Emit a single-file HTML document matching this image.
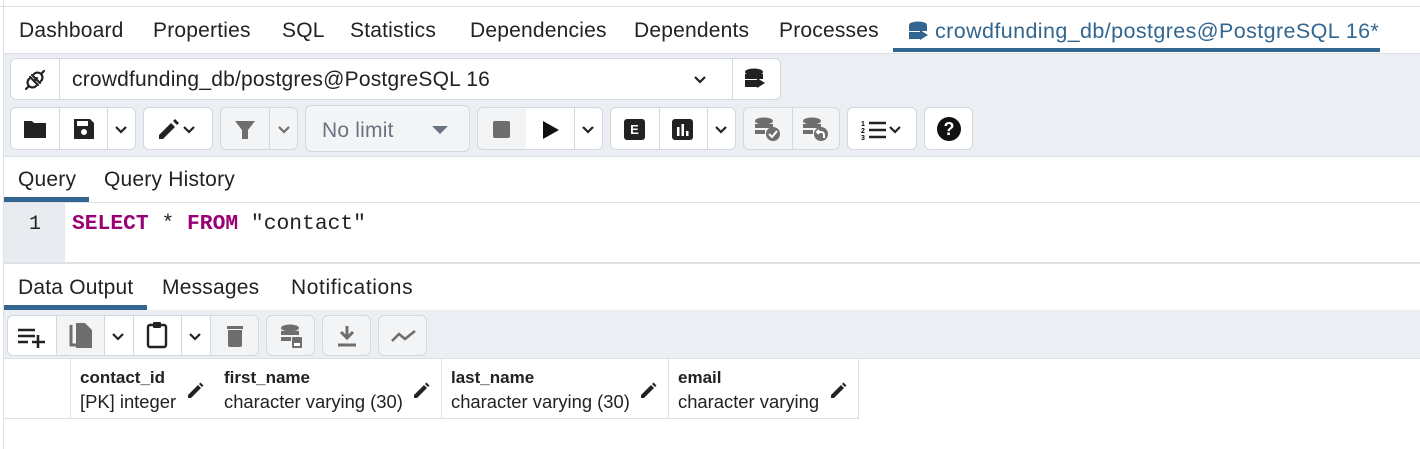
<!DOCTYPE html>
<html><head><meta charset="utf-8"><style>
*{box-sizing:border-box;margin:0;padding:0}
body{width:1420px;height:449px;position:relative;background:#fff;font-family:"Liberation Sans",sans-serif;color:#222;overflow:hidden}
.a{position:absolute}
.t{position:absolute;font-size:21px;letter-spacing:0.2px;color:#222;white-space:nowrap}
.grp{position:absolute;border:1px solid #d3d7de;border-radius:6px;background:#fff;overflow:hidden}
.dis{background:#f3f4f6}
.div{position:absolute;top:0;bottom:0;width:1px;background:#d3d7de}
.ic{position:absolute}
svg{display:block}
</style></head><body>
<div class="a" style="left:3px;top:0;width:1px;height:449px;background:#dde1e6"></div>
<div class="a" style="left:0;top:6px;width:1420px;height:1px;background:#dde1e6"></div>
<div class="t" style="left:19px;top:19px">Dashboard</div>
<div class="t" style="left:153px;top:19px">Properties</div>
<div class="t" style="left:282px;top:19px">SQL</div>
<div class="t" style="left:350px;top:19px">Statistics</div>
<div class="t" style="left:470px;top:19px">Dependencies</div>
<div class="t" style="left:634px;top:19px">Dependents</div>
<div class="t" style="left:779px;top:19px">Processes</div>
<svg class="a" style="left:908px;top:21px" width="22" height="20" viewBox="0 0 22 20"><ellipse cx="10" cy="4" rx="9" ry="3.5" fill="#326690"/><rect x="1" y="5" width="18" height="5" fill="#326690"/><rect x="1" y="11" width="12" height="7" fill="#326690"/><path d="M12 9 L20 14 L12 19Z" fill="#326690"/></svg>
<div class="t" style="left:935px;top:19px;color:#326690;font-size:21.5px;letter-spacing:0.4px">crowdfunding_db/postgres@PostgreSQL 16*</div>
<div class="a" style="left:893px;top:48px;width:487px;height:4px;background:#326690"></div>
<div class="a" style="left:4px;top:53px;width:1416px;height:103px;background:#ebeef2;border-top:1px solid #dde1e6"></div>
<div class="grp" style="left:10px;top:58px;width:771px;height:42px">
<div class="div" style="left:48px"></div><div class="div" style="left:721px"></div>
<svg class="ic" style="left:12px;top:9px" width="24" height="24" viewBox="0 0 24 24" fill="none" stroke="#222" stroke-width="2.2" stroke-linecap="round"><path d="M9 7 L17 15 M7 9 L15 17 M6 11 a4 4 0 0 0 7 7 M11 6 a4 4 0 0 1 7 7 M3 21 L6 18 M18 6 L21 3 M12 12 l2 -2"/></svg>
<div class="t" style="left:61px;top:9px">crowdfunding_db/postgres@PostgreSQL 16</div>
<svg class="ic" style="left:682px;top:16px" width="14" height="10" viewBox="0 0 14 10"><path d="M2 2 L7 7 L12 2" fill="none" stroke="#222" stroke-width="2.2"/></svg>
<svg class="ic" style="left:733px;top:9px" width="22" height="22" viewBox="0 0 22 22"><ellipse cx="10" cy="4" rx="9" ry="3.5" fill="#222"/><rect x="1" y="6" width="18" height="5" fill="#222"/><rect x="1" y="12" width="12" height="7" fill="#222"/><path d="M13 10 L21 15 L13 20Z" fill="#222"/></svg>
</div>
<div class="grp" style="left:10px;top:107px;width:126px;height:43px"><div class="div" style="left:48px"></div><div class="div" style="left:96px"></div>
<svg class="ic" style="left:12px;top:11px" width="24" height="20" viewBox="0 0 24 20"><path d="M1 2 h8 l2 2 h12 v15 h-22z" fill="#222"/></svg>
<svg class="ic" style="left:62px;top:10px" width="22" height="22" viewBox="0 0 22 22"><path d="M1 1 h16 l4 4 v16 h-20z" fill="#222"/><rect x="4" y="3" width="11" height="5" fill="#fff"/><circle cx="11" cy="14" r="3" fill="#fff"/></svg>
<svg class="ic" style="left:103px;top:17px" width="14" height="10" viewBox="0 0 14 10"><path d="M2 2 L7 7 L12 2" fill="none" stroke="#222" stroke-width="2.2"/></svg></div>
<div class="grp" style="left:143px;top:107px;width:70px;height:43px">
<svg class="ic" style="left:12px;top:10px" width="24" height="24" viewBox="0 0 24 24"><path d="M3 21 L3 17 L15 5 L19 9 L7 21Z M17 3 L19 1 L23 5 L21 7Z" fill="#222"/></svg>
<svg class="ic" style="left:38px;top:17px" width="14" height="10" viewBox="0 0 14 10"><path d="M2 2 L7 7 L12 2" fill="none" stroke="#222" stroke-width="2.2"/></svg></div>
<div class="grp dis" style="left:220px;top:107px;width:78px;height:43px"><div class="div" style="left:48px"></div>
<svg class="ic" style="left:13px;top:12px" width="22" height="20" viewBox="0 0 22 20"><path d="M1 1 h20 l-7 9 v9 h-6 v-9z" fill="#6e6e6e"/></svg>
<svg class="ic" style="left:56px;top:17px" width="14" height="10" viewBox="0 0 14 10"><path d="M2 2 L7 7 L12 2" fill="none" stroke="#6e6e6e" stroke-width="2.2"/></svg></div>
<div class="grp dis" style="left:305px;top:105px;width:165px;height:47px">
<div class="t" style="left:16px;top:13px;color:#6b7280">No limit</div>
<svg class="ic" style="left:125px;top:19px" width="18" height="10" viewBox="0 0 18 10"><path d="M1 1 h16 l-8 8z" fill="#6b7280"/></svg></div>
<div class="grp dis" style="left:477px;top:107px;width:126px;height:43px"><div class="div" style="left:48px;background:#d3d7de"></div><div class="div" style="left:96px"></div>
<div class="a" style="left:48px;top:0;width:48px;height:43px;background:#fff"></div><div class="a" style="left:97px;top:0;width:30px;height:43px;background:#fff"></div>
<div class="ic" style="left:15px;top:13px;width:17px;height:17px;background:#6e6e6e;border-radius:2px"></div>
<svg class="ic" style="left:64px;top:12px" width="18" height="20" viewBox="0 0 18 20"><path d="M1 1 L17 10 L1 19Z" fill="#111"/></svg>
<svg class="ic" style="left:103px;top:17px" width="14" height="10" viewBox="0 0 14 10"><path d="M2 2 L7 7 L12 2" fill="none" stroke="#222" stroke-width="2.2"/></svg></div>
<div class="grp" style="left:610px;top:107px;width:126px;height:43px"><div class="div" style="left:48px"></div><div class="div" style="left:96px"></div>
<div class="ic" style="left:13px;top:11px;width:21px;height:21px;background:#222;border-radius:3px;color:#fff;font-size:13px;font-weight:bold;text-align:center;line-height:21px">E</div>
<svg class="ic" style="left:61px;top:11px" width="21" height="21" viewBox="0 0 21 21"><rect width="21" height="21" rx="3" fill="#222"/><rect x="5" y="8" width="2.5" height="9" fill="#fff"/><rect x="9.5" y="5" width="2.5" height="12" fill="#fff"/><rect x="14" y="12" width="2.5" height="5" fill="#fff"/></svg>
<svg class="ic" style="left:103px;top:17px" width="14" height="10" viewBox="0 0 14 10"><path d="M2 2 L7 7 L12 2" fill="none" stroke="#222" stroke-width="2.2"/></svg></div>
<div class="grp dis" style="left:743px;top:107px;width:97px;height:43px"><div class="div" style="left:48px"></div>
<svg class="ic" style="left:10px;top:9px" width="28" height="26" viewBox="0 0 28 26"><ellipse cx="10" cy="4" rx="9" ry="3.5" fill="#6e6e6e"/><rect x="1" y="7" width="18" height="4" fill="#6e6e6e"/><rect x="1" y="13" width="10" height="4" fill="#6e6e6e"/><circle cx="19" cy="17" r="7" fill="#6e6e6e"/><path d="M15 17 l3 3 l5 -6" stroke="#fff" stroke-width="2" fill="none"/></svg>
<svg class="ic" style="left:58px;top:9px" width="28" height="26" viewBox="0 0 28 26"><ellipse cx="10" cy="4" rx="9" ry="3.5" fill="#6e6e6e"/><rect x="1" y="7" width="18" height="4" fill="#6e6e6e"/><rect x="1" y="13" width="10" height="4" fill="#6e6e6e"/><circle cx="19" cy="17" r="7" fill="#6e6e6e"/><path d="M22 21 v-3 a3 3 0 0 0 -3 -3 h-4 M17 13 l-2 2 l2 2" stroke="#fff" stroke-width="2" fill="none"/></svg></div>
<div class="grp" style="left:847px;top:107px;width:70px;height:43px">
<svg class="ic" style="left:12px;top:12px" width="28" height="20" viewBox="0 0 28 20"><path d="M9 3 h17 M9 10 h17 M9 17 h17" stroke="#222" stroke-width="2.4"/><text x="1" y="6" font-size="7" font-weight="bold" font-family="Liberation Sans">1</text><text x="1" y="13" font-size="7" font-weight="bold" font-family="Liberation Sans">2</text><text x="1" y="20" font-size="7" font-weight="bold" font-family="Liberation Sans">3</text></svg>
<svg class="ic" style="left:40px;top:17px" width="14" height="10" viewBox="0 0 14 10"><path d="M2 2 L7 7 L12 2" fill="none" stroke="#222" stroke-width="2.2"/></svg></div>
<div class="grp" style="left:924px;top:107px;width:49px;height:43px">
<div class="ic" style="left:12px;top:9px;width:24px;height:24px;border-radius:50%;background:#111;color:#fff;font-weight:bold;font-size:18px;text-align:center;line-height:24px">?</div></div>
<div class="a" style="left:4px;top:156px;width:1416px;height:1px;background:#dde1e6"></div>
<div class="t" style="left:18px;top:168px">Query</div>
<div class="t" style="left:104px;top:168px">Query History</div>
<div class="a" style="left:4px;top:197px;width:85px;height:5px;background:#326690"></div>
<div class="a" style="left:4px;top:202px;width:1416px;height:1px;background:#dde1e6"></div>
<div class="a" style="left:4px;top:203px;width:61px;height:59px;background:#e8ebef"></div>
<div class="a" style="left:29px;top:213px;font-family:'Liberation Mono',monospace;font-size:20px;color:#222">1</div>
<div class="a" style="left:72px;top:212px;font-family:'Liberation Mono',monospace;font-size:21.3px;white-space:pre;color:#222"><span style="color:#990073;font-weight:bold">SELECT</span> * <span style="color:#990073;font-weight:bold">FROM</span> "contact"</div>
<div class="a" style="left:4px;top:262px;width:1416px;height:2px;background:#dde1e6"></div>
<div class="t" style="left:18px;top:276px">Data Output</div>
<div class="t" style="left:162px;top:276px">Messages</div>
<div class="t" style="left:291px;top:276px;letter-spacing:0.6px">Notifications</div>
<div class="a" style="left:4px;top:305px;width:143px;height:5px;background:#326690"></div>
<div class="a" style="left:4px;top:310px;width:1416px;height:48px;background:#ebeef2"></div>
<div class="grp" style="left:7px;top:315px;width:252px;height:41px"><div class="div" style="left:48px"></div><div class="div" style="left:96px"></div><div class="div" style="left:125px"></div><div class="div" style="left:173px"></div><div class="div" style="left:202px"></div>
<div class="a" style="left:49px;top:0;width:47px;height:41px;background:#f3f4f6"></div><div class="a" style="left:203px;top:0;width:49px;height:41px;background:#f3f4f6"></div>
<svg class="ic" style="left:9px;top:10px" width="30" height="22" viewBox="0 0 30 22"><path d="M1 4 h17 M1 10 h17 M1 16 h10 M15 16 h13 M21 9 v14" stroke="#222" stroke-width="2.6"/></svg>
<svg class="ic" style="left:61px;top:6px" width="24" height="28" viewBox="0 0 24 28"><path d="M2 3 v20 h15" stroke="#6e6e6e" stroke-width="3" fill="none"/><path d="M7 1 h9 l7 7 v18 h-16z" fill="#6e6e6e"/></svg>
<svg class="ic" style="left:103px;top:16px" width="14" height="10" viewBox="0 0 14 10"><path d="M2 2 L7 7 L12 2" fill="none" stroke="#222" stroke-width="2.2"/></svg>
<svg class="ic" style="left:138px;top:5px" width="22" height="28" viewBox="0 0 22 28"><rect x="2" y="4" width="18" height="22" rx="2" fill="none" stroke="#222" stroke-width="2.4"/><rect x="7" y="1" width="8" height="6" rx="1" fill="#222"/></svg>
<svg class="ic" style="left:180px;top:16px" width="14" height="10" viewBox="0 0 14 10"><path d="M2 2 L7 7 L12 2" fill="none" stroke="#222" stroke-width="2.2"/></svg>
<svg class="ic" style="left:219px;top:8px" width="16" height="24" viewBox="0 0 16 24"><rect x="0" y="2" width="16" height="3" fill="#6e6e6e"/><path d="M1 6 h14 v15 a2 2 0 0 1 -2 2 h-10 a2 2 0 0 1 -2 -2z" fill="#6e6e6e"/></svg></div>
<div class="grp dis" style="left:266px;top:315px;width:49px;height:41px">
<svg class="ic" style="left:13px;top:8px" width="24" height="26" viewBox="0 0 24 26"><ellipse cx="10" cy="4" rx="9" ry="3.5" fill="#6e6e6e"/><rect x="1" y="7" width="18" height="4" fill="#6e6e6e"/><rect x="1" y="13" width="10" height="4" fill="#6e6e6e"/><rect x="12" y="13" width="10" height="11" rx="1" fill="#6e6e6e"/><rect x="14" y="19" width="6" height="3" fill="#fff"/></svg></div>
<div class="grp dis" style="left:322px;top:315px;width:49px;height:41px">
<svg class="ic" style="left:14px;top:9px" width="20" height="22" viewBox="0 0 20 22"><path d="M10 1 v11 M4 7 l6 6 l6 -6 M1 20 h18" stroke="#6e6e6e" stroke-width="3" fill="none"/></svg></div>
<div class="grp dis" style="left:378px;top:315px;width:49px;height:41px">
<svg class="ic" style="left:11px;top:12px" width="28" height="16" viewBox="0 0 28 16"><path d="M2 13 L9 6 L15 11 L25 3" stroke="#6e6e6e" stroke-width="2.6" fill="none"/></svg></div>
<div class="a" style="left:4px;top:358px;width:1416px;height:1px;background:#dde1e6"></div>
<div class="a" style="left:4px;top:418px;width:855px;height:1px;background:#dde1e6"></div>
<div class="a" style="left:70px;top:358px;width:1px;height:61px;background:#dde1e6"></div>
<div class="a" style="left:441px;top:358px;width:1px;height:61px;background:#dde1e6"></div>
<div class="a" style="left:668px;top:358px;width:1px;height:61px;background:#dde1e6"></div>
<div class="a" style="left:858px;top:358px;width:1px;height:61px;background:#dde1e6"></div>
<div class="t" style="left:80px;top:368px;font-size:17px;letter-spacing:0;font-weight:bold">contact_id</div><div class="t" style="left:80px;top:391px;font-size:18.4px;letter-spacing:0">[PK] integer</div>
<div class="t" style="left:224px;top:368px;font-size:17px;letter-spacing:0;font-weight:bold">first_name</div><div class="t" style="left:224px;top:391px;font-size:18.4px;letter-spacing:0">character varying (30)</div>
<div class="t" style="left:451px;top:368px;font-size:17px;letter-spacing:0;font-weight:bold">last_name</div><div class="t" style="left:451px;top:391px;font-size:18.4px;letter-spacing:0">character varying (30)</div>
<div class="t" style="left:678px;top:368px;font-size:17px;letter-spacing:0;font-weight:bold">email</div><div class="t" style="left:678px;top:391px;font-size:18.4px;letter-spacing:0">character varying</div>
<svg class="a" style="left:187px;top:382px" width="17" height="17" viewBox="0 0 17 17"><path d="M1 16 L1 13 L11 3 L14 6 L4 16Z M12 2 L13.5 0.5 L16.5 3.5 L15 5Z" fill="#222"/></svg>
<svg class="a" style="left:413px;top:382px" width="17" height="17" viewBox="0 0 17 17"><path d="M1 16 L1 13 L11 3 L14 6 L4 16Z M12 2 L13.5 0.5 L16.5 3.5 L15 5Z" fill="#222"/></svg>
<svg class="a" style="left:640px;top:382px" width="17" height="17" viewBox="0 0 17 17"><path d="M1 16 L1 13 L11 3 L14 6 L4 16Z M12 2 L13.5 0.5 L16.5 3.5 L15 5Z" fill="#222"/></svg>
<svg class="a" style="left:830px;top:382px" width="17" height="17" viewBox="0 0 17 17"><path d="M1 16 L1 13 L11 3 L14 6 L4 16Z M12 2 L13.5 0.5 L16.5 3.5 L15 5Z" fill="#222"/></svg>
</body></html>
